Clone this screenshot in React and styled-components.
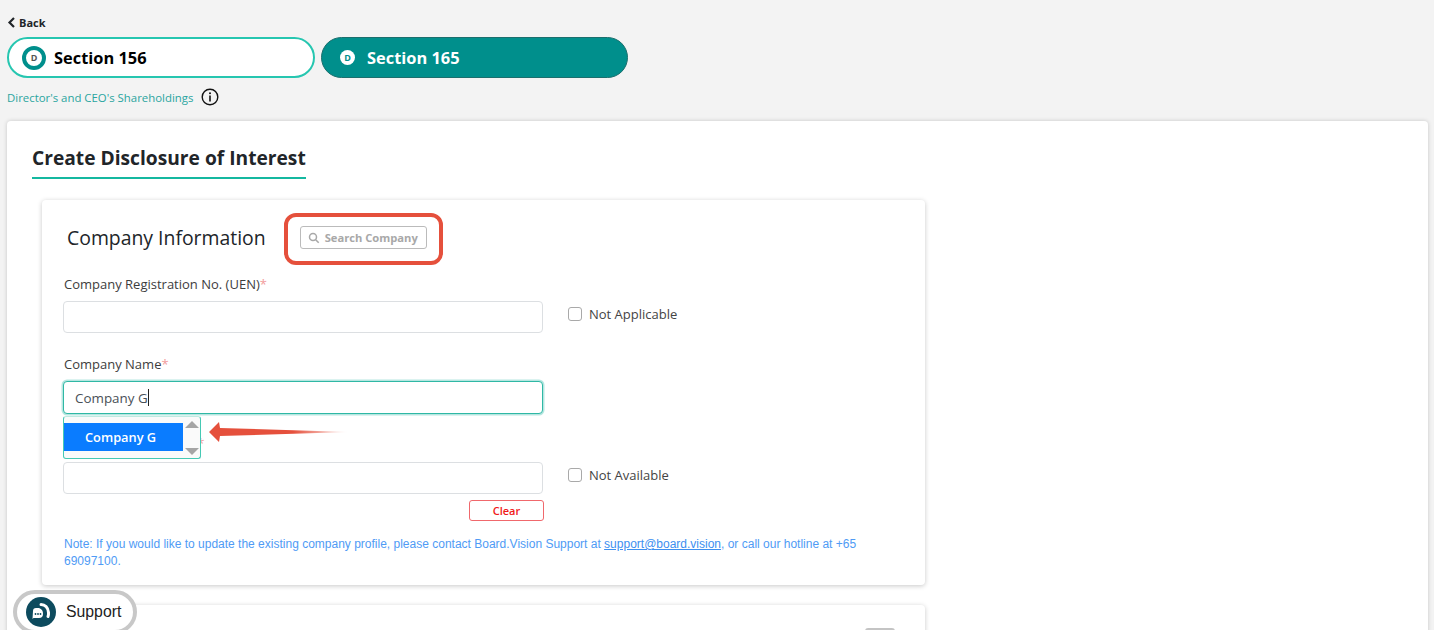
import * as React from "react"
import styled, { createGlobalStyle } from "styled-components"

const Global = createGlobalStyle`
  html, body {
    margin: 0;
    height: 100%;
    overflow: hidden;
    background: #f3f3f3;
    font-family: "Open Sans", "Noto Sans", sans-serif;
    color: #212529;
  }
  * { box-sizing: border-box; }
`

const Page = styled.div`
  height: 630px;
  overflow: hidden;
  padding: 14px 6px 0 7px;
  position: relative;
`
const Back = styled.div`
  display: flex;
  align-items: center;
  gap: 3px;
  height: 17px;
  margin-bottom: 6px;
  font-size: 11px;
  font-weight: 700;
  color: #212529;
`
const Tabs = styled.div`
  display: flex;
  gap: 6px;
`
const Tab = styled.div`
  width: ${p => (p.$active ? "307px" : "308px")};
  height: 41px;
  border-radius: 21px;
  display: flex;
  align-items: center;
  gap: ${p => (p.$active ? "12px" : "8px")};
  padding-left: ${p => (p.$active ? "18px" : "13px")};
  font-size: 16.4px;
  font-weight: 700;
  background: ${p => (p.$active ? "#008f8c" : "#fff")};
  border: ${p => (p.$active ? "1.5px solid #1b6f6d" : "2px solid #26c6b0")};
  color: ${p => (p.$active ? "#fff" : "#000")};
`
const Badge = styled.span`
  width: ${p => (p.$active ? "15px" : "24px")};
  height: ${p => (p.$active ? "15px" : "24px")};
  border-radius: 50%;
  flex: none;
  display: flex;
  align-items: center;
  justify-content: center;
  background: #fff;
  border: ${p => (p.$active ? "none" : "4px solid #008f8c")};
  color: ${p => (p.$active ? "#008f8c" : "#555")};
  font-size: 9px;
  font-weight: 700;
`
const Sub = styled.div`
  display: flex;
  align-items: center;
  gap: 8px;
  height: 20px;
  margin: 9px 0 14px;
  font-size: 11.4px;
  color: #2aa5a0;
`
const MainCard = styled.section`
  background: #fff;
  border-radius: 4px;
  box-shadow: 0 0 4px rgba(0, 0, 0, 0.18);
  padding: 23px 0 0 25px;
  height: 560px;
`
const Title = styled.h1`
  display: inline-block;
  margin: 0;
  font-size: 19.2px;
  line-height: 28px;
  font-weight: 700;
  color: #212529;
  padding-bottom: 5px;
  border-bottom: 2px solid #14b8a0;
`
const Panel = styled.div`
  width: 883px;
  margin-left: 10px;
  background: #fff;
  border-radius: 4px;
  box-shadow: 0 1px 5px rgba(0, 0, 0, 0.22);
`
const InfoPanel = styled(Panel)`
  height: 385px;
  margin-top: 21px;
  padding: 0 21px;
  position: relative;
`
const NextPanel = styled(Panel)`
  height: 60px;
  margin-top: 20px;
  position: relative;
`
const Toggle = styled.span`
  position: absolute;
  right: 30px;
  top: 23px;
  width: 30px;
  height: 12px;
  background: #c4c4c4;
  border-radius: 3px;
`
const Head = styled.div`
  display: flex;
  align-items: center;
  height: 75px;
  padding-left: 4px;
  gap: 34px;
`
const HeadTitle = styled.h2`
  margin: 0;
  font-size: 19.4px;
  font-weight: 400;
  color: #212529;
`
const SearchButton = styled.div`
  width: 127px;
  height: 23px;
  display: flex;
  align-items: center;
  gap: 5px;
  padding-left: 7px;
  border: 1px solid #bbb;
  border-radius: 3px;
  font-size: 11.2px;
  font-weight: 700;
  color: #a8a8a8;
`
const Highlight = styled.div`
  position: absolute;
  left: 242px;
  top: 13px;
  width: 159px;
  height: 52px;
  border: 4px solid #e5503c;
  border-radius: 12px;
`
const Field = styled.div`
  margin-bottom: ${p => p.$mb || "22px"};
`
const Label = styled.label`
  display: block;
  font-size: 13px;
  line-height: 18px;
  margin: 0 0 ${p => p.$gap || "8px"} 1px;
  color: #3d3d3d;
  & > i {
    color: #f29b9b;
    font-style: normal;
  }
`
const Row = styled.div`
  display: flex;
  align-items: center;
  gap: 25px;
`
const Input = styled.div`
  width: 480px;
  height: ${p => (p.$focus ? "33px" : "32px")};
  flex: none;
  display: flex;
  align-items: center;
  padding-left: 11px;
  font-size: 13.4px;
  color: #495057;
  background: #fff;
  border: 1px solid ${p => (p.$focus ? "#2fb8a5" : "#dcdfe2")};
  border-radius: 4px;
  box-shadow: ${p => (p.$focus ? "0 0 0 1.5px rgba(47, 184, 165, 0.35)" : "none")};
`
const Caret = styled.span`
  width: 1px;
  height: 17px;
  background: #222;
`
const Check = styled.label`
  display: flex;
  align-items: center;
  gap: 7px;
  margin-bottom: 6px;
  font-size: 13px;
  color: #444;
`
const Box = styled.span`
  width: 14px;
  height: 14px;
  border: 1px solid #a9a9a9;
  border-radius: 3px;
  background: #fff;
`
const Dropdown = styled.div`
  position: absolute;
  left: 21px;
  top: 216px;
  width: 138px;
  height: 43px;
  background: #fafafa;
  border: 1px solid #45c9b4;
  border-top-color: #bfe9e1;
  border-radius: 3px;
  padding-top: 6px;
  display: flex;
  z-index: 2;
`
const Option = styled.div`
  width: 119px;
  height: 28px;
  background: #0a7cff;
  color: #fff;
  font-size: 12.8px;
  font-weight: 600;
  display: flex;
  align-items: center;
  padding-left: 21px;
`
const Scroll = styled.div`
  flex: 1;
  display: flex;
  flex-direction: column;
  align-items: center;
  justify-content: space-between;
  margin-top: -2px;
  padding: 0 0 3px;
`
const Arrow = styled.svg`
  position: absolute;
  left: 165px;
  top: 219px;
  z-index: 3;
`
const ClearRow = styled.div`
  display: flex;
  justify-content: flex-end;
  width: 481px;
  margin-top: 6px;
`
const Clear = styled.div`
  width: 75px;
  height: 21px;
  border: 1px solid #f0686c;
  border-radius: 3px;
  display: flex;
  align-items: center;
  justify-content: center;
  font-size: 11px;
  font-weight: 600;
  color: #f01818;
`
const Note = styled.p`
  margin: 15px 0 0 1px;
  width: 820px;
  font-family: "Liberation Sans", Arial, sans-serif;
  font-size: 12px;
  line-height: 17px;
  color: #4f9bf5;
  & > a {
    color: #3d8ff0;
    text-decoration: underline;
  }
`
const Support = styled.div`
  position: absolute;
  left: 13px;
  top: 590px;
  width: 124px;
  height: 44px;
  border: 4px solid #c8c8c8;
  border-radius: 22px;
  background: #fff;
  display: flex;
  align-items: center;
  gap: 10px;
  padding-left: 9px;
  font-family: "Liberation Sans", Arial, sans-serif;
  font-size: 15.8px;
  color: #222;
`

const ChatIcon = () => (
  <svg width="30" height="30" viewBox="0 0 30 30">
    <circle cx="15" cy="15" r="15" fill="#0d4b5e" />
    <path d="M7 14a3 3 0 0 1 3-3h3a6 6 0 0 1 4 6 4 4 0 0 1-4 4H7.5l-1 1z" fill="#fff" />
    <path d="M15 7.5c4 0 7 3 7.5 8 .1 1.5 0 3-.5 4" stroke="#fff" strokeWidth="3" fill="none" strokeLinecap="round" />
    <circle cx="9.5" cy="17" r="0.9" fill="#0d4b5e" />
    <circle cx="12" cy="17" r="0.9" fill="#0d4b5e" />
    <circle cx="14.5" cy="17" r="0.9" fill="#0d4b5e" />
  </svg>
)

const App = () => (
  <Page>
    <Global />
    <Back>
      <svg width="9" height="11" viewBox="0 0 9 11">
        <path d="M7 1 2.5 5.5 7 10" stroke="#212529" strokeWidth="2.2" fill="none" />
      </svg>
      Back
    </Back>
    <Tabs>
      <Tab>
        <Badge>D</Badge>
        Section 156
      </Tab>
      <Tab $active>
        <Badge $active>D</Badge>
        Section 165
      </Tab>
    </Tabs>
    <Sub>
      Director's and CEO's Shareholdings
      <svg width="18" height="18" viewBox="0 0 18 18">
        <circle cx="9" cy="9" r="7.8" stroke="#111" strokeWidth="1.4" fill="none" />
        <circle cx="9" cy="5.3" r="1" fill="#111" />
        <path d="M9 7.6v6" stroke="#111" strokeWidth="1.6" />
      </svg>
    </Sub>
    <MainCard>
      <Title>Create Disclosure of Interest</Title>
      <InfoPanel>
        <Head>
          <HeadTitle>Company Information</HeadTitle>
          <SearchButton>
            <svg width="12" height="12" viewBox="0 0 12 12">
              <circle cx="5" cy="5" r="3.5" stroke="#a8a8a8" strokeWidth="1.5" fill="none" />
              <path d="m7.7 7.7 3 3" stroke="#a8a8a8" strokeWidth="1.6" />
            </svg>
            Search Company
          </SearchButton>
        </Head>
        <Highlight />
        <Field>
          <Label>Company Registration No. (UEN)<i>*</i></Label>
          <Row>
            <Input />
            <Check><Box />Not Applicable</Check>
          </Row>
        </Field>
        <Field $mb="20px">
          <Label>Company Name<i>*</i></Label>
          <Input $focus>Company G<Caret /></Input>
        </Field>
        <Field $mb="0">
          <Label $gap="10px">Company Designation<i>*</i></Label>
          <Row>
            <Input />
            <Check><Box />Not Available</Check>
          </Row>
        </Field>
        <ClearRow><Clear>Clear</Clear></ClearRow>
        <Note>
          Note: If you would like to update the existing company profile, please contact Board.Vision Support at <a>support@board.vision</a>, or call our hotline at +65 69097100.
        </Note>
        <Dropdown>
          <Option>Company G</Option>
          <Scroll>
            <svg width="14" height="7" viewBox="0 0 14 7"><path d="M7 0 14 7H0z" fill="#a5a5a5" /></svg>
            <svg width="14" height="7" viewBox="0 0 14 7"><path d="M0 0h14L7 7z" fill="#a5a5a5" /></svg>
          </Scroll>
        </Dropdown>
        <Arrow width="142" height="26" viewBox="0 0 142 26">
          <defs>
            <linearGradient id="fade" x1="0" x2="1" y1="0" y2="0">
              <stop offset="0.6" stopColor="#e5503c" />
              <stop offset="1" stopColor="#e5503c" stopOpacity="0" />
            </linearGradient>
          </defs>
          <path d="M2 13 12 3 13 9 142 13 13 17 12 23z" fill="url(#fade)" />
        </Arrow>
      </InfoPanel>
      <NextPanel><Toggle /></NextPanel>
    </MainCard>
    <Support>
      <ChatIcon />
      Support
    </Support>
  </Page>
)

export default App
